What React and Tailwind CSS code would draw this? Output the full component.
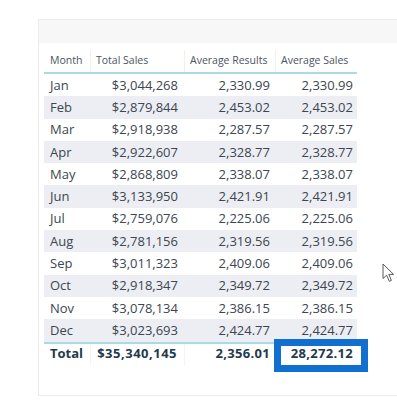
import React from 'react';

// sales by month, same numbers as the report visual
const rows = [
  ['Jan', '$3,044,268', '2,330.99', '2,330.99'],
  ['Feb', '$2,879,844', '2,453.02', '2,453.02'],
  ['Mar', '$2,918,938', '2,287.57', '2,287.57'],
  ['Apr', '$2,922,607', '2,328.77', '2,328.77'],
  ['May', '$2,868,809', '2,338.07', '2,338.07'],
  ['Jun', '$3,133,950', '2,421.91', '2,421.91'],
  ['Jul', '$2,759,076', '2,225.06', '2,225.06'],
  ['Aug', '$2,781,156', '2,319.56', '2,319.56'],
  ['Sep', '$3,011,323', '2,409.06', '2,409.06'],
  ['Oct', '$2,918,347', '2,349.72', '2,349.72'],
  ['Nov', '$3,078,134', '2,386.15', '2,386.15'],
  ['Dec', '$3,023,693', '2,424.77', '2,424.77'],
];

const cols = 'grid grid-cols-[47px_94px_91px_81px]';

const Cursor = () => (
  <svg width="13" height="20" viewBox="0 0 13 20" className="absolute left-[382px] top-[263px]">
    <path
      d="M1 1 L1 15.5 L4.6 12.2 L7.3 18.3 L9.4 17.4 L6.8 11.4 L11.6 11.4 Z"
      fill="#ffffff"
      stroke="#555b61"
      strokeWidth="1"
      strokeLinejoin="round"
    />
  </svg>
);

export default function App() {
  return (
    <div
      className="relative w-[397px] h-[406px] bg-white overflow-hidden text-[#3c4650]"
      style={{ fontFamily: '"Open Sans", "Noto Sans", sans-serif' }}
    >
      {/* card of the visual */}
      <div className="absolute left-[38px] top-[19px] w-[380px] h-[377px] border border-[#ececec] bg-white">
        <div className="h-[23px] bg-[#f7f7f7]" />

        <div className="ml-[5px] mt-[7px] w-[313px]">
          {/* header */}
          <div className={`${cols} h-[24px] text-[10.5px] text-[#4a5560] border-b-2 border-[#a9dbe2]`}>
            <div className="pl-[6px] flex items-center border-r border-[#f0f0f0]">Month</div>
            <div className="pl-[5px] flex items-center border-r border-[#f0f0f0]">Total Sales</div>
            <div className="pl-[5px] flex items-center border-r border-[#f0f0f0]">Average Results</div>
            <div className="pl-[5px] flex items-center">Average Sales</div>
          </div>

          {/* body */}
          {rows.map((r, i) => (
            <div
              key={r[0]}
              className={`${cols} h-[22.3px] text-[13px] leading-none ${i % 2 === 1 ? 'bg-[#eceef3]' : ''}`}
            >
              <div className="pl-[6px] flex items-center">{r[0]}</div>
              <div className="pr-[7px] flex items-center justify-end">{r[1]}</div>
              <div className="pr-[6px] flex items-center justify-end">{r[2]}</div>
              <div className="pr-[4px] flex items-center justify-end">{r[3]}</div>
            </div>
          ))}

          {/* total */}
          <div className={`${cols} h-[23px] text-[13px] font-bold text-[#233a4c] border-t-2 border-[#a9dbe2]`}>
            <div className="pl-[6px] flex items-center border-r border-[#f3f3f3]">Total</div>
            <div className="pr-[7px] flex items-center justify-end border-r border-[#f3f3f3] tracking-[0.5px]">$35,340,145</div>
            <div className="pr-[6px] flex items-center justify-end tracking-[0.3px]">2,356.01</div>
            <div className="relative flex items-center justify-end pr-[4px]">
              <div className="absolute left-[-2px] top-[-5px] w-[94px] h-[33px] border-[7px] border-[#1170cf]" />
              <span className="relative tracking-[0.3px]">28,272.12</span>
            </div>
          </div>
        </div>
      </div>

      <Cursor />
    </div>
  );
}
